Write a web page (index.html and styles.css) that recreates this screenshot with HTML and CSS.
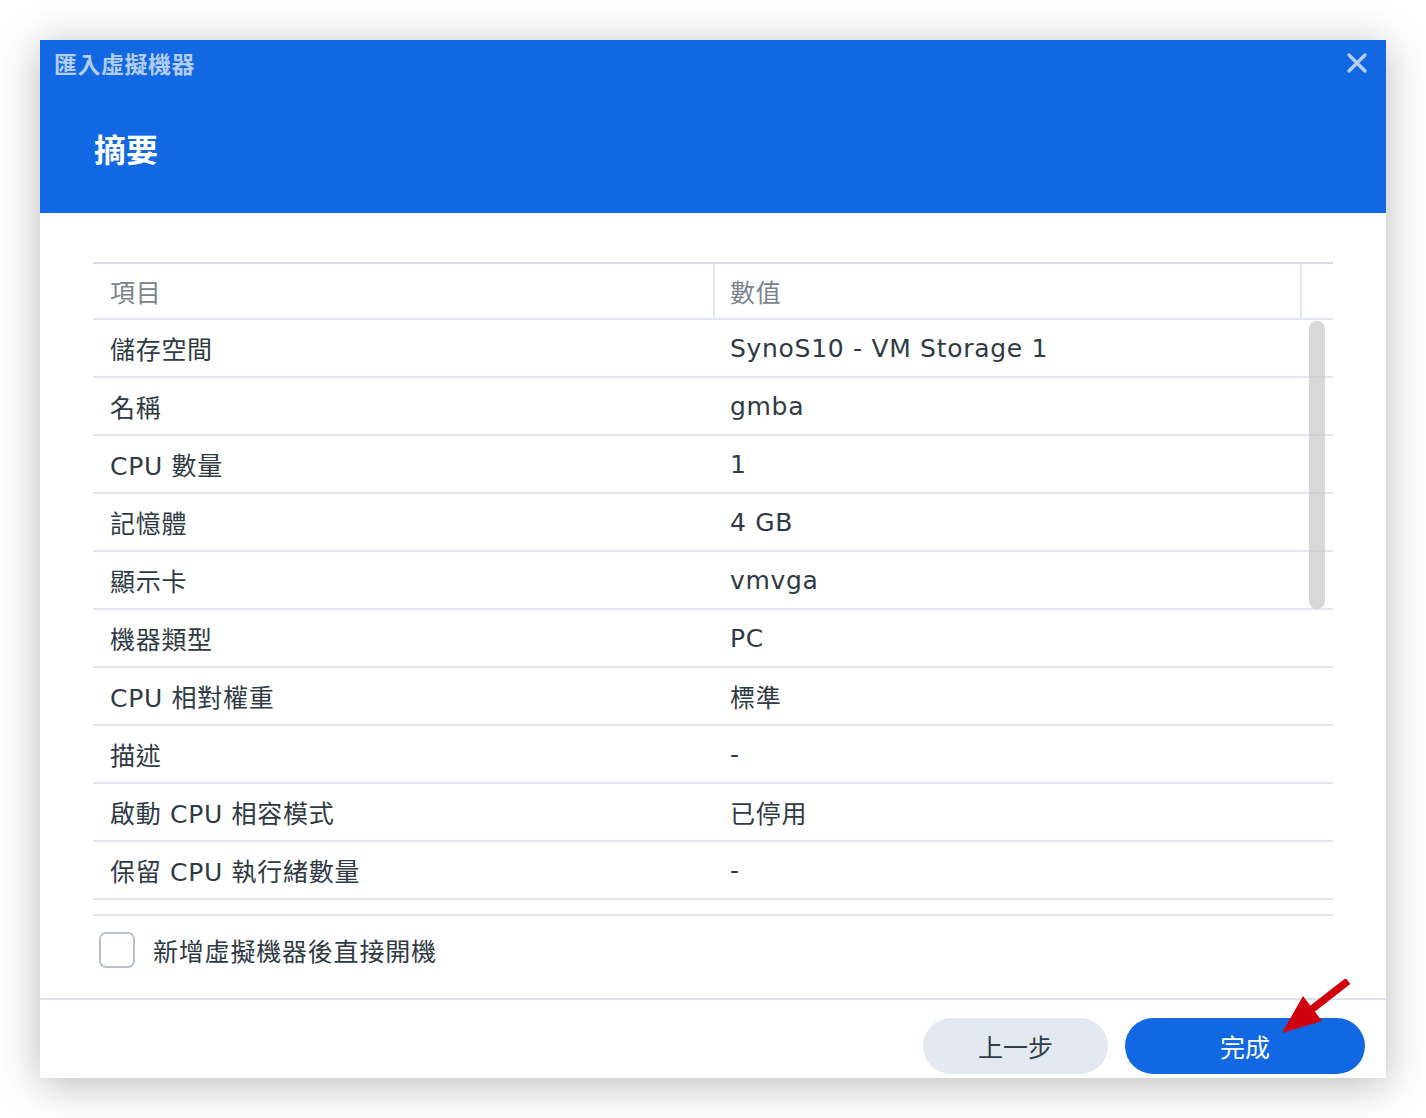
FILE: index.html
```html
<!DOCTYPE html>
<html lang="zh-Hant">
<head>
<meta charset="utf-8">
<title>匯入虛擬機器</title>
<link rel="stylesheet" href="styles.css">
</head>
<body>
<div class="dialog">
  <header class="head">
    <div class="titlebar">
      <span class="title">匯入虛擬機器</span>
      <svg class="close" width="22" height="22" viewBox="0 0 22 22"><path d="M3 3 L19 19 M19 3 L3 19" stroke="#b4cdf5" stroke-width="3.4" stroke-linecap="round"/></svg>
    </div>
    <h1 class="step">摘要</h1>
  </header>

  <main class="body">
    <div class="grid">
      <div class="ghead">
        <div class="hc c1">項目</div>
        <div class="hc c2">數值</div>
        <div class="hc c3"></div>
      </div>
      <div class="gbody">
        <div class="row"><div class="c1">儲存空間</div><div class="c2">SynoS10 - VM Storage 1</div></div>
        <div class="row"><div class="c1">名稱</div><div class="c2">gmba</div></div>
        <div class="row"><div class="c1">CPU 數量</div><div class="c2">1</div></div>
        <div class="row"><div class="c1">記憶體</div><div class="c2">4 GB</div></div>
        <div class="row"><div class="c1">顯示卡</div><div class="c2">vmvga</div></div>
        <div class="row"><div class="c1">機器類型</div><div class="c2">PC</div></div>
        <div class="row"><div class="c1">CPU 相對權重</div><div class="c2">標準</div></div>
        <div class="row"><div class="c1">描述</div><div class="c2">-</div></div>
        <div class="row"><div class="c1">啟動 CPU 相容模式</div><div class="c2">已停用</div></div>
        <div class="row"><div class="c1">保留 CPU 執行緒數量</div><div class="c2">-</div></div>
        <div class="thumb"></div>
      </div>
    </div>
    <label class="check">
      <span class="box"></span>
      <span class="label">新增虛擬機器後直接開機</span>
    </label>
  </main>

  <footer class="foot">
    <button class="btn prev">上一步</button>
    <button class="btn done">完成</button>
    <svg class="arrow" width="80" height="62" viewBox="0 0 80 62"><path d="M67 2 L26 34" stroke="#d0000f" stroke-width="7.5"/><polygon points="1,54 22,17 41,42" fill="#d0000f"/></svg>
  </footer>
</div>
</body>
</html>
```
FILE: styles.css
```css
* { box-sizing: border-box; }
html, body { margin: 0; padding: 0; }
body {
  background: #ffffff;
  width: 1426px;
  height: 1118px;
  padding: 40px;
  font-family: "DejaVu Sans", "Noto Sans CJK TC", sans-serif;
  color: #2f3a45;
}
.dialog {
  width: 1346px;
  height: 1038px;
  background: #fff;
  box-shadow: 0 6px 40px rgba(0,0,0,0.28);
  display: flex;
  flex-direction: column;
  position: relative;
}
.head {
  background: #1268e3;
  height: 173px;
  flex: none;
}
.titlebar {
  display: flex;
  justify-content: space-between;
  align-items: center;
  height: 46px;
  padding: 0 18px 0 14px;
  font-family: "Noto Sans", "Noto Sans CJK TC", sans-serif;
}
.title {
  font-size: 23px;
  font-weight: 700;
  color: #b4cdf5;
  letter-spacing: 0.5px;
}
.close { display: block; margin-top: 0; }
.step {
  margin: 42px 0 0 54px;
  font-family: "Noto Sans", "Noto Sans CJK TC", sans-serif;
  font-size: 32px;
  font-weight: 700;
  color: #fff;
  line-height: 44px;
}
.body {
  flex: 1;
  padding: 49px 53px 0 53px;
  display: flex;
  flex-direction: column;
}
.grid {
  border-top: 2px solid #d5dde6;
  border-bottom: 2px solid #e3e8ee;
  display: flex;
  flex-direction: column;
  height: 654px;
}
.ghead {
  display: flex;
  height: 56px;
  border-bottom: 2px solid #e3e8ee;
  flex: none;
}
.hc {
  font-size: 25px;
  letter-spacing: 0.7px;
  color: #7b838c;
  display: flex;
  align-items: center;
}
.c1 { width: 620px; padding-left: 17px; flex: none; }
.c2 { flex: 1; padding-left: 17px; }
.ghead .c2 { border-left: 2px solid #e3e8ee; padding-left: 15px; }
.ghead .c3 { width: 33px; flex: none; border-left: 2px solid #e3e8ee; }
.gbody {
  position: relative;
  flex: 1;
  overflow: hidden;
}
.row {
  display: flex;
  align-items: center;
  height: 58px;
  border-bottom: 2px solid #e3e8ee;
  font-size: 25px;
  letter-spacing: 0.7px;
  color: #2f3a45;
}
.thumb {
  position: absolute;
  right: 8px;
  top: 1px;
  width: 16px;
  height: 288px;
  border-radius: 8px;
  background: rgba(200,200,200,0.7);
}
.check {
  display: flex;
  align-items: center;
  height: 68px;
  margin-bottom: 14px;
  padding-left: 6px;
}
.box {
  width: 36px;
  height: 36px;
  border: 2px solid #b9c1cb;
  border-radius: 7px;
  margin-right: 18px;
}
.label {
  font-size: 25px;
  letter-spacing: 0.8px;
  color: #2f3a45;
}
.foot {
  flex: none;
  height: 81px;
  border-top: 2px solid #dde3ea;
  display: flex;
  justify-content: flex-end;
  align-items: flex-start;
  padding: 18px 21px 0 0;
  gap: 17px;
  position: relative;
}
.btn {
  height: 56px;
  border: none;
  border-radius: 28px;
  font-family: "Noto Sans", "Noto Sans CJK TC", sans-serif;
  font-size: 25px;
  cursor: pointer;
}
.prev { width: 185px; background: #e3e9f0; color: #333d47; }
.done { width: 240px; background: #1268e3; color: #fff; }
.arrow {
  position: absolute;
  left: 1241px;
  top: -21px;
}
```
